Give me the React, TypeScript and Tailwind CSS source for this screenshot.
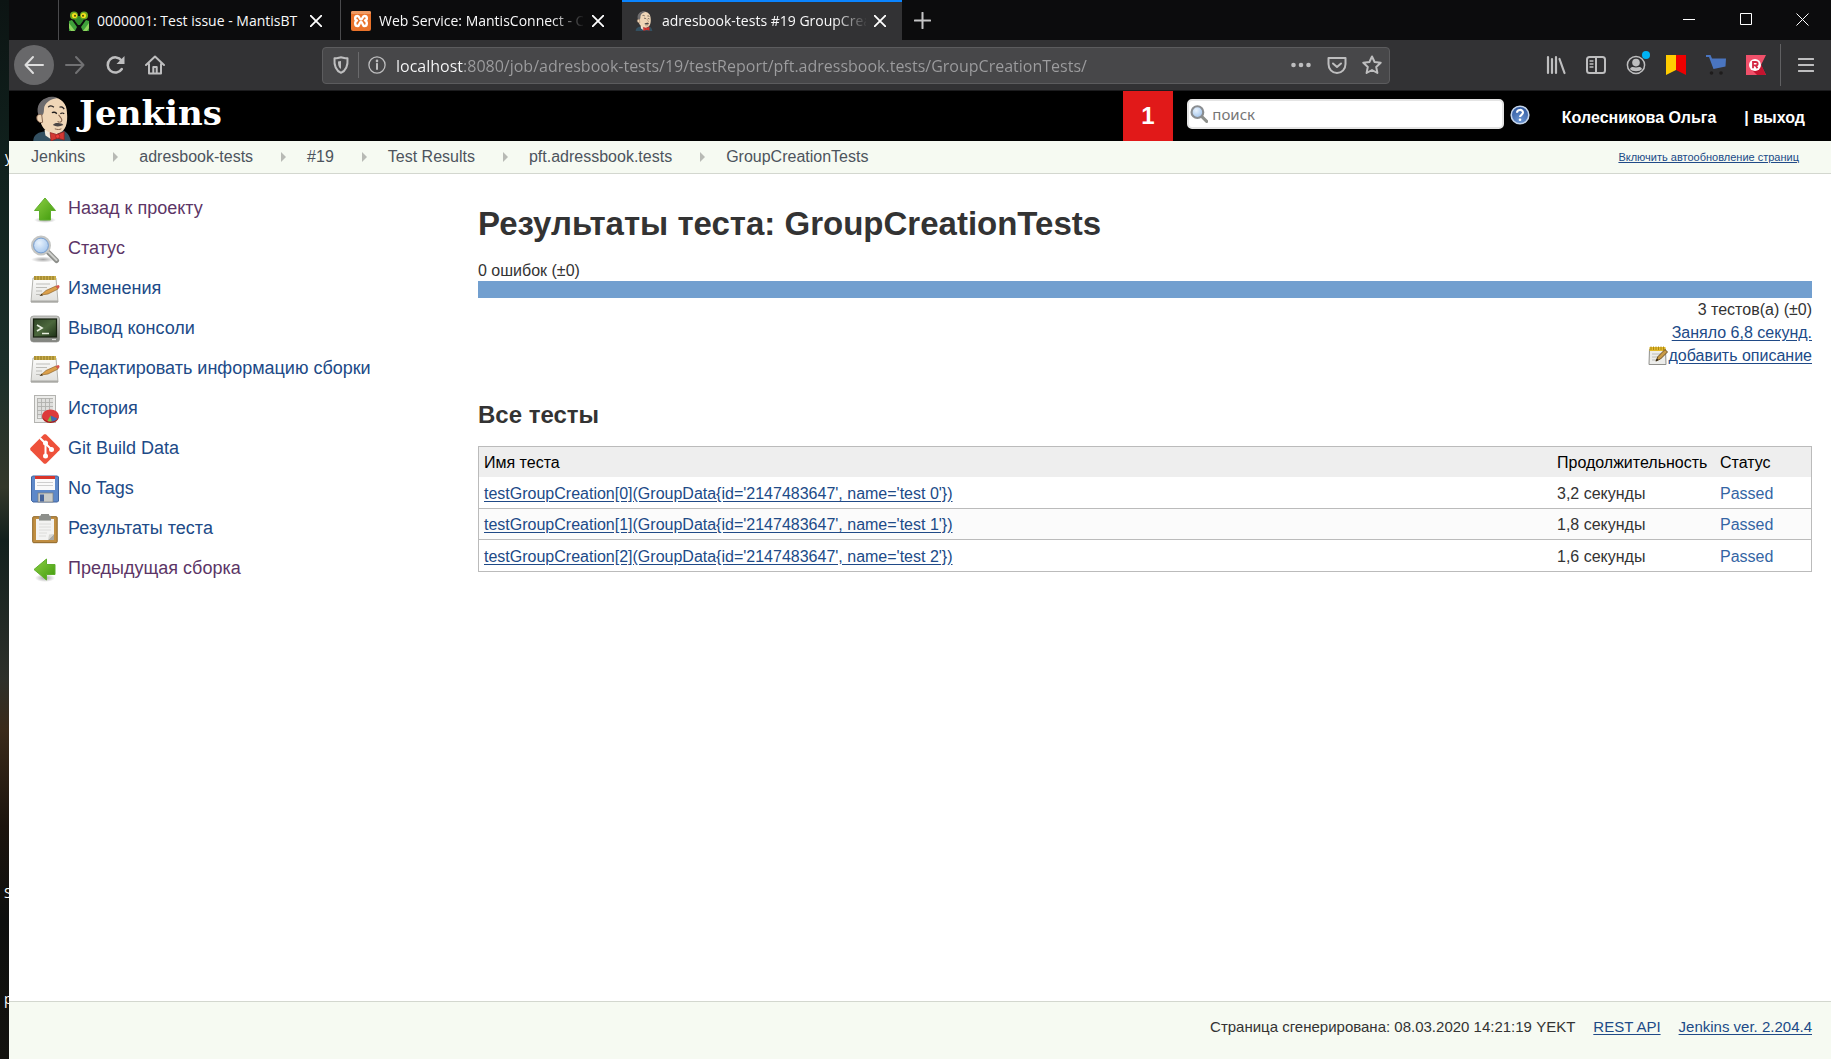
import React from 'react';

/* ---------- favicons and logo ---------- */

const Butler = ({ className }: { className: string }) => (
  <svg viewBox="0 0 42 48" className={className} aria-hidden="true">
    <path d="M1 48C1 42 5 39 11 38L31 36C37 38 40 42 41 48Z" fill="#335061" />
    <path d="M13 36L28 36L26 44L20 46L14 42Z" fill="#f4eadb" />
    <path d="M8 22C5 12 9 4 18 2C29 0 37 7 37 18C38 28 36 38 27 40C17 41 10 34 9 28Z" fill="#f0d6b7" />
    <path d="M8 23C3 15 6 5 15 2C19 0 24 1 27 2C20 3 15 6 13 11C12 14 13 18 11 20Z" fill="#6d6b6d" />
    <path d="M10 20C6 19 4 21 5 25C6 28 9 29 11 28Z" fill="#f0d6b7" stroke="#81614c" strokeWidth="1" />
    <path d="M17 12C18 10 21 10 23 12M29 12C31 11 33 12 34 14" fill="none" stroke="#231f20" strokeWidth="1.3" />
    <path d="M21 18C22 17 25 17 26 19M30 19C31 18 33 18 34 19" fill="none" stroke="#231f20" strokeWidth="1.5" />
    <path d="M28 20C30 23 33 25 31 27C30 28 28 28 27 27" fill="none" stroke="#81614c" strokeWidth="1.1" />
    <path d="M22 31C24 28 27 29 29 29C31 29 33 30 33 31C29 33 25 33 22 31Z" fill="#4b4645" />
    <path d="M24 35C27 36 29 36 31 35" fill="none" stroke="#81614c" strokeWidth="1" />
    <path d="M19 39L26 41L34 38L34 47L27 45L20 48Z" fill="#d33833" stroke="#8d1f1c" strokeWidth="0.8" />
    <circle cx="27" cy="43" r="2.2" fill="#ef3d3a" stroke="#8d1f1c" strokeWidth="0.6" />
  </svg>
);

const Mantis = () => (
  <svg viewBox="0 0 20 20" className="size-5 shrink-0" aria-hidden="true">
    <path d="M0 10L3 9L8 16L6 20H0ZM20 10L17 9L12 16L14 20H20Z" fill="#3fa03a" />
    <path d="M0 12L6 20H2L0 17ZM20 12L14 20H18L20 17Z" fill="#8fd45f" />
    <path d="M4 5H16L14 10L11 14H9L6 10Z" fill="#2f8a2c" />
    <circle cx="5" cy="4.500" r="4" fill="#6aa81e" />
    <circle cx="15" cy="4.500" r="4" fill="#6aa81e" />
    <circle cx="5.500" cy="4.500" r="2.600" fill="#f3e01c" />
    <circle cx="14.500" cy="4.500" r="2.600" fill="#f3e01c" />
    <circle cx="6" cy="4.800" r="1" fill="#4a4a08" />
    <circle cx="14" cy="4.800" r="1" fill="#4a4a08" />
  </svg>
);

const Xampp = () => (
  <svg viewBox="0 0 20 20" className="size-5 shrink-0" aria-hidden="true">
    <rect width="20" height="20" rx="2" fill="#e9722a" />
    <rect width="20" height="3" rx="1.5" fill="#f09a62" />
    <path
      d="M6.500 5C3.500 5 3.500 9 6 9.500C3.500 10.500 3.500 15 6.500 15C9 15 8 11 10 11C12 11 11 15 13.500 15C16.500 15 16.500 10.500 14 9.500C16.500 9 16.500 5 13.500 5C11 5 12 8.500 10 8.500C8 8.500 9 5 6.500 5Z"
      fill="none"
      stroke="#fff"
      strokeWidth="2.4"
      strokeLinejoin="round"
    />
  </svg>
);

/* ---------- browser icons ---------- */

const Line = ({ children, className = 'size-5', width = 2 }: { children: React.ReactNode; className?: string; width?: number }) => (
  <svg
    viewBox="0 0 20 20"
    className={className}
    fill="none"
    stroke="currentColor"
    strokeWidth={width}
    strokeLinecap="round"
    strokeLinejoin="round"
    aria-hidden="true"
  >
    {children}
  </svg>
);

const CloseMark = () => (
  <Line className="size-3" width={3}>
    <path d="M1 1L19 19M19 1L1 19" />
  </Line>
);

type Tab = { title: string; icon: React.ReactNode; active?: boolean; fade?: boolean };

const tabs: Tab[] = [
  { title: '0000001: Test issue - MantisBT', icon: <Mantis /> },
  { title: 'Web Service: MantisConnect - Current', icon: <Xampp />, fade: true },
  { title: 'adresbook-tests #19 GroupCreationTests', icon: <Butler className="h-5 w-5 shrink-0" />, active: true, fade: true },
];

const TabStrip = () => (
  <div className="flex h-10 bg-[#0c0c0d] pl-[49px]">
    {tabs.map((t) => (
      <div
        key={t.title}
        className={
          t.active
            ? 'flex w-[280px] items-center border-t-2 border-[#0a84ff] bg-[#323234] pr-3 pb-px pl-3'
            : 'flex w-[282px] items-center border-l border-[#4a4a4c] pt-px pr-[14px] pl-[10px]'
        }
      >
        {t.icon}
        <span
          className={
            t.fade
              ? 'ml-2 w-[204px] overflow-hidden whitespace-nowrap text-[14px] leading-5 text-[#f9f9fa] [mask-image:linear-gradient(90deg,#000_172px,transparent_206px)]'
              : 'ml-2 w-[204px] whitespace-nowrap text-[14px] leading-5 text-[#f9f9fa]'
          }
        >
          {t.title}
        </span>
        <button aria-label="Закрыть вкладку" className="ml-auto flex size-5 items-center justify-center text-white">
          <CloseMark />
        </button>
      </div>
    ))}
    <button aria-label="Новая вкладка" className="flex w-10 items-center justify-center text-[#c4c4c5]">
      <Line className="size-[17px]" width={2.4}>
        <path d="M10 1V19M1 10H19" />
      </Line>
    </button>
    <div className="ml-auto flex text-white">
      <button aria-label="Свернуть" className="flex h-[38px] w-[57px] items-center justify-center">
        <svg viewBox="0 0 12 12" className="size-3" aria-hidden="true"><path d="M0 6.500H12" stroke="currentColor" /></svg>
      </button>
      <button aria-label="Развернуть" className="flex h-[38px] w-[57px] items-center justify-center">
        <svg viewBox="0 0 12 12" className="size-3" aria-hidden="true"><path d="M.5.5H11.500V11.500H.5Z" fill="none" stroke="currentColor" /></svg>
      </button>
      <button aria-label="Закрыть" className="flex h-[38px] w-[57px] items-center justify-center">
        <svg viewBox="0 0 13 13" className="size-[13px]" aria-hidden="true"><path d="M.5.5L12.500 12.500M12.500.5L.5 12.500" stroke="currentColor" /></svg>
      </button>
    </div>
  </div>
);

const ToolButton = ({ label, children }: { label: string; children: React.ReactNode }) => (
  <button aria-label={label} className="flex h-10 w-10 shrink-0 items-center justify-center">
    {children}
  </button>
);

const NavBar = () => (
  <div className="flex h-[51px] items-center border-b border-[#1c1c1e] bg-[#323234] pl-[5px] text-[#bebebf]">
    <button aria-label="Назад" className="mr-px flex size-10 items-center justify-center rounded-full bg-[#68686a] text-[#dedede]">
      <Line><path d="M19 10H1.500M9 2L1.500 10L9 18" /></Line>
    </button>
    <span className="text-[#717173]">
      <ToolButton label="Вперёд"><Line><path d="M1 10H18.500M11 2L18.500 10L11 18" /></Line></ToolButton>
    </span>
    <ToolButton label="Обновить">
      <svg viewBox="0 0 20 20" className="size-5" aria-hidden="true">
        <path d="M16.500 5.500A7.600 7.600 0 1 0 16.800 14" fill="none" stroke="currentColor" strokeWidth="2.500" strokeLinecap="round" />
        <path d="M19.500 1V9H11.500Z" fill="currentColor" />
      </svg>
    </ToolButton>
    <ToolButton label="Домой">
      <Line>
        <path d="M1 10L10 1.500L19 10M4 9V18.500H16V9" />
        <path d="M8.300 18V12H11.700V18" />
      </Line>
    </ToolButton>

    <div className="mr-[146px] ml-[147px] flex h-[37px] flex-1 items-center rounded-sm border border-[#5c5c5e] bg-[#474749]">
      <button aria-label="Защита" className="flex w-[35px] items-center justify-center">
        <svg viewBox="0 0 18 18" className="size-[18px]" aria-hidden="true">
          <path d="M2.500 2.300C5 2.500 7 1.500 9 1.200C11 1.500 13 2.500 15.500 2.300C16 9 14.500 14.500 9 16.800C3.500 14.500 2 9 2.500 2.300Z" fill="none" stroke="currentColor" strokeWidth="2" strokeLinejoin="round" />
          <path d="M9 5V13C6.500 11.500 6 9 6 5.500Z" fill="currentColor" />
        </svg>
      </button>
      <div className="h-[26px] w-px bg-[#6a6a6c]" />
      <button aria-label="Сведения о сайте" className="flex w-[35px] items-center justify-center">
        <svg viewBox="0 0 18 18" className="size-[18px]" aria-hidden="true">
          <circle cx="9" cy="9" r="8.100" fill="none" stroke="currentColor" strokeWidth="1.300" />
          <path d="M9 7.800V13" stroke="currentColor" strokeWidth="2" strokeLinecap="round" />
          <circle cx="9" cy="4.900" r="1.300" fill="currentColor" />
        </svg>
      </button>
      <input
        aria-label="Адрес"
        readOnly
        value="localhost:8080/job/adresbook-tests/19/testReport/pft.adressbook.tests/GroupCreationTests/"
        className="ml-0.5 h-[34px] min-w-0 flex-1 bg-[linear-gradient(90deg,#f9f9fa_68px,#9d9d9f_68px)] bg-clip-text pt-0.5 text-[16px] text-transparent outline-none"
      />
      <button aria-label="Действия" className="flex w-9 items-center justify-center">
        <svg viewBox="0 0 20 20" className="size-5" fill="currentColor" aria-hidden="true">
          <circle cx="2.500" cy="10" r="2.300" /><circle cx="10" cy="10" r="2.300" /><circle cx="17.500" cy="10" r="2.300" />
        </svg>
      </button>
      <button aria-label="Pocket" className="flex w-[35px] items-center justify-center">
        <Line>
          <path d="M1.500 3H18.500V9C18.500 14 15 18 10 18C5 18 1.500 14 1.500 9Z" />
          <path d="M6 8.500L10 12L14 8.500" />
        </Line>
      </button>
      <button aria-label="Закладка" className="flex w-[35px] items-center justify-center">
        <Line><path d="M10 1.500L12.600 7L18.700 7.700L14.200 11.900L15.400 18L10 15L4.600 18L5.800 11.900L1.300 7.700L7.400 7Z" /></Line>
      </button>
    </div>

    <ToolButton label="Библиотека">
      <Line width={2.2}><path d="M2 2V18M6 4V18M10 2V18M13.500 4L18.500 18" strokeWidth="2.200" /></Line>
    </ToolButton>
    <ToolButton label="Боковая панель">
      <Line>
        <rect x="1" y="2" width="18" height="16" rx="2.500" />
        <path d="M10 2V18" />
        <path d="M4 6H7M4 9H7M4 12H7" strokeWidth="1.300" />
      </Line>
    </ToolButton>
    <ToolButton label="Аккаунт">
      <span className="relative flex">
        <svg viewBox="0 0 20 20" className="size-5" aria-hidden="true">
          <circle cx="10" cy="10" r="8.600" fill="none" stroke="currentColor" strokeWidth="1.500" />
          <circle cx="10" cy="7.600" r="3.800" fill="currentColor" />
          <path d="M4 14C5 11.500 7 12 10 12.500C13 12 15 11.500 16 14C14 17 6 17 4 14Z" fill="currentColor" />
        </svg>
        <span className="absolute -top-1 -right-1 size-2 rounded-full bg-[#00b3f4]" />
      </span>
    </ToolButton>
    <ToolButton label="Закладки Яндекса">
      <svg viewBox="0 0 20 20" className="size-5" aria-hidden="true">
        <path d="M0 0H10V15L0 20Z" fill="#ffcc00" /><path d="M10 0H20V20L10 15Z" fill="#ee0000" />
      </svg>
    </ToolButton>
    <ToolButton label="Покупки">
      <svg viewBox="0 0 20 20" className="size-5" aria-hidden="true">
        <path d="M0 0H4.500L6 3.500H20L19.500 11.500L7.500 14L3 2H0Z" fill="#4a75c0" />
        <circle cx="5.500" cy="18" r="1.800" fill="#1e1c1c" /><circle cx="15" cy="18" r="1.800" fill="#1e1c1c" />
      </svg>
    </ToolButton>
    <ToolButton label="Расширение">
      <svg viewBox="0 0 20 20" className="size-5" aria-hidden="true">
        <path d="M0 0H20L15 10L20 20H0Z" fill="#f0506a" />
        <path d="M5 14L14 7L20 20H11Z" fill="#c4142f" />
        <circle cx="9" cy="10" r="6" fill="#fff" />
        <path d="M7 13.300V7H9.800C12.300 7 12.300 10.400 9.800 10.400H7M9.600 10.400L11.500 13.300" fill="none" stroke="#d42743" strokeWidth="1.800" />
      </svg>
    </ToolButton>
    <div className="ml-1 h-[42px] w-px bg-[#606062]" />
    <button aria-label="Меню" className="flex h-10 w-[50px] items-center justify-center">
      <Line className="size-4" width={2.6}><path d="M1 2.500H19M1 10H19M1 17.500H19" /></Line>
    </button>
  </div>
);

/* ---------- page icons ---------- */

const Icon = ({ children }: { children: React.ReactNode }) => (
  <svg viewBox="0 0 30 30" className="size-[30px] shrink-0" aria-hidden="true">{children}</svg>
);

const Gradients = () => (
  <svg className="absolute size-0" aria-hidden="true">
    <defs>
      <linearGradient id="green" x1="0" y1="0" x2="1" y2="1">
        <stop offset="0" stopColor="#8fd044" /><stop offset="1" stopColor="#3f9a0c" />
      </linearGradient>
      <radialGradient id="glass" cx="0.4" cy="0.35" r="0.7">
        <stop offset="0" stopColor="#e9f3fd" /><stop offset="1" stopColor="#9cc0ea" />
      </radialGradient>
      <linearGradient id="screen" x1="0" y1="0" x2="1" y2="1">
        <stop offset="0" stopColor="#2e4425" /><stop offset="0.5" stopColor="#4c683d" /><stop offset="1" stopColor="#1d3016" />
      </linearGradient>
      <linearGradient id="bezel" x1="0" y1="0" x2="0" y2="1">
        <stop offset="0" stopColor="#c9cac6" /><stop offset="1" stopColor="#7f827c" />
      </linearGradient>
      <linearGradient id="paper" x1="0" y1="0" x2="0" y2="1">
        <stop offset="0" stopColor="#fdfdfc" /><stop offset="1" stopColor="#dfdfdc" />
      </linearGradient>
      <radialGradient id="shadow">
        <stop offset="0" stopColor="#000" stopOpacity="0.350" /><stop offset="1" stopColor="#000" stopOpacity="0" />
      </radialGradient>
      <radialGradient id="help" cx="0.5" cy="0.8" r="0.8">
        <stop offset="0" stopColor="#6d97d3" /><stop offset="1" stopColor="#2d559c" />
      </radialGradient>
    </defs>
  </svg>
);

const UpArrow = () => (
  <Icon>
    <ellipse cx="15" cy="26" rx="11" ry="3" fill="url(#shadow)" />
    <path d="M15 4L25.500 16.500H20.500V26H9.500V16.500H4.500Z" fill="url(#green)" stroke="#5fae2c" />
  </Icon>
);

const LeftArrow = () => (
  <Icon>
    <ellipse cx="15" cy="24" rx="10" ry="4" fill="url(#shadow)" />
    <path d="M4 15.500L16.500 5V10.500H25V20.500H16.500V26Z" fill="url(#green)" stroke="#5fae2c" />
  </Icon>
);

const Magnifier = () => (
  <Icon>
    <ellipse cx="13" cy="25.500" rx="12" ry="3" fill="url(#shadow)" />
    <path d="M18 18L26.500 26.500" stroke="#8d8f8b" strokeWidth="5" strokeLinecap="round" />
    <path d="M19 18.500L26.500 26" stroke="#cfd0cd" strokeWidth="2" strokeLinecap="round" />
    <circle cx="11" cy="11.500" r="8.700" fill="url(#glass)" stroke="#c5c6c4" strokeWidth="2.600" />
    <circle cx="11" cy="11.500" r="7.400" fill="none" stroke="#6d96cc" strokeWidth="0.900" />
  </Icon>
);

const Notepad = () => (
  <Icon>
    <path d="M3 4H26L28 28H1Z" fill="url(#paper)" stroke="#b4b4b0" />
    <path d="M1 26.500H28V28.500H1Z" fill="#a9a9a5" />
    <path d="M4 2H26V6H4Z" fill="#c9ad49" />
    <path d="M5 2V6M8 2V6M11 2V6M14 2V6M17 2V6M20 2V6M23 2V6" stroke="#8c7526" />
    <path d="M6 10H20M6 13.500H17M6 17H12M6 20.500H10" stroke="#bdbdb9" strokeWidth="1.200" />
    <path d="M11 21L16 16.500L26 12L28 15L18 20Z" fill="#dca04a" stroke="#8f6428" strokeWidth="0.700" />
    <path d="M25.500 12L28.500 11C30 11.500 30 13.500 28 15Z" fill="#d8574e" />
    <path d="M9.500 22L11.500 19.500L13 21.500Z" fill="#4f3b1d" />
  </Icon>
);

const Terminal = () => (
  <Icon>
    <rect x="0.500" y="2" width="29" height="26" rx="3" fill="url(#bezel)" stroke="#8f918c" strokeWidth="0.700" />
    <rect x="3.500" y="5" width="23" height="18" fill="url(#screen)" stroke="#17200f" strokeWidth="1.200" />
    <path d="M7 11L12 14L7 17" fill="none" stroke="#e8efe0" strokeWidth="1.700" />
    <path d="M12 19.500H19" stroke="#e8efe0" strokeWidth="1.500" />
    <path d="M22 25.500H26" stroke="#d7d8d5" strokeWidth="1.200" />
  </Icon>
);

const Chart = () => (
  <Icon>
    <rect x="4.500" y="1.500" width="21" height="27" fill="#ececea" stroke="#b3b3b0" />
    <path d="M7 4H23V23H7Z" fill="#dededc" />
    <path d="M7 4.500H23M7 8.500H23M7 12.500H23M7 16.500H23M7 20.500H23M7 24.500H18M7.500 4V25M11.500 4V25M15.500 4V25M19.500 4V20" stroke="#b0b0ad" strokeWidth="0.900" />
    <ellipse cx="20.500" cy="23" rx="8.300" ry="6" fill="#a81717" />
    <ellipse cx="20.500" cy="21.500" rx="8.300" ry="6" fill="#dd3b3b" />
    <path d="M20.500 21.500L27.500 24.500C26 26.500 24 27.500 21.500 27.500Z" fill="#3e6db3" />
    <path d="M20.500 21.500L21.500 27.500C20 27.600 18.500 27.400 17.500 27Z" fill="#7cc043" />
  </Icon>
);

const Git = () => (
  <Icon>
    <path d="M13.800.6C14.500 0 15.500 0 16.200.6L29.400 13.800C30 14.500 30 15.500 29.400 16.200L16.200 29.400C15.500 30 14.500 30 13.800 29.400L.6 16.200C0 15.500 0 14.500.6 13.800Z" fill="#ee513b" />
    <path d="M10 4L15.500 9.500V22.500M15.500 9.500L21 15" fill="none" stroke="#fff" strokeWidth="2" />
    <circle cx="15.500" cy="9" r="2.500" fill="#fff" />
    <circle cx="15.500" cy="22" r="2.500" fill="#fff" />
    <circle cx="21.500" cy="15.500" r="2.500" fill="#fff" />
  </Icon>
);

const Floppy = () => (
  <Icon>
    <path d="M2.500 2H27.500L28.500 3V27L27.500 28H3L1.500 26.500V3Z" fill="#5d88c9" stroke="#41659f" />
    <rect x="5" y="2.500" width="20" height="13.500" fill="#fafafa" />
    <rect x="5" y="2" width="20" height="3" fill="#d8352a" />
    <path d="M7 8.500H23M7 11.500H23" stroke="#cfcfcf" />
    <rect x="8" y="19" width="15" height="9" fill="#c9cbc8" stroke="#7d7f7c" strokeWidth="0.700" />
    <rect x="10" y="20.500" width="4" height="7" fill="#45639a" />
  </Icon>
);

const Clipboard = () => (
  <Icon>
    <rect x="2.700" y="2.700" width="24.500" height="26" rx="1" fill="#c08e42" stroke="#8d6426" />
    <path d="M6 5H24V26H6Z" fill="#f3f3f2" />
    <path d="M9 10H21M9 13H21M9 16H21M9 19H17M9 22H16" stroke="#dcdcda" />
    <path d="M24 20L18 26H24Z" fill="#a9a9a6" />
    <path d="M18 26L19 20.500L24 20Z" fill="#d7d7d4" />
    <path d="M9 7V3C9 2 10 1.500 11 1.500V0H19V1.500C20 1.500 21 2 21 3V7Z" fill="#8d8f8b" />
    <path d="M9 6.500H21" stroke="#b9bbb7" />
  </Icon>
);

/* ---------- page ---------- */

const Header = () => (
  <header className="flex h-[50px] bg-black">
    <a href="#home" className="flex pt-[5px] pl-[23px]">
      <Butler className="h-[45px] w-10" />
      <span className="ml-[7px] font-['DejaVu_Serif','Liberation_Serif',serif] text-[34px] leading-[34px] font-bold text-white">Jenkins</span>
    </a>
    <a href="#monitors" className="ml-auto flex w-[50px] items-center justify-center bg-[#e11919] text-[24px] font-bold text-white">1</a>
    <form className="ml-3.5 flex items-start pt-2">
      <label className="flex h-[30px] w-[317px] items-center rounded-[5px] border-2 border-[#e4e4e4] bg-white">
        <svg viewBox="0 0 30 30" className="ml-px size-5" aria-hidden="true">
          <path d="M18 18L27 27" stroke="#8d8f8b" strokeWidth="5" strokeLinecap="round" />
          <circle cx="12" cy="12" r="9.500" fill="url(#glass)" stroke="#8a8d90" strokeWidth="3.500" />
        </svg>
        <input type="text" placeholder="поиск" aria-label="поиск" className="ml-1 w-full min-w-0 bg-transparent font-['Noto_Sans',sans-serif] text-[15px] outline-none placeholder:text-[#757575]" />
      </label>
      <a href="#help" aria-label="Справка" className="mt-1.5 ml-1.5">
        <svg viewBox="0 0 20 20" className="size-5" aria-hidden="true">
          <circle cx="10" cy="10" r="8.800" fill="url(#help)" stroke="#c6d6ec" strokeWidth="1.600" />
          <path d="M7 7.800C7 4 13 4 13 7.600C13 9.800 10 9.800 10 12" fill="none" stroke="#fff" strokeWidth="2.100" />
          <circle cx="10" cy="14.700" r="1.300" fill="#fff" />
        </svg>
      </a>
    </form>
    <div className="flex items-center pt-1 pr-[26px] pl-8 text-[16px] font-bold whitespace-nowrap text-white">
      <a href="#user">Колесникова Ольга</a>
      <span className="ml-7">|&nbsp;<a href="#logout">выход</a></span>
    </div>
  </header>
);

const crumbs = ['Jenkins', 'adresbook-tests', '#19', 'Test Results', 'pft.adressbook.tests', 'GroupCreationTests'];

const Breadcrumbs = () => (
  <nav className="flex h-[33px] items-center border-b border-[#d3d7cf] bg-[#f6faf2] pr-8 pl-[22px] text-[16px] text-[#4d545d]">
    {crumbs.map((c, i) => (
      <React.Fragment key={c}>
        {i > 0 && (
          <svg viewBox="0 0 5 10" className="mr-[21px] ml-7 h-2.5 w-[5px]" aria-hidden="true"><path d="M0 0L5 5L0 10Z" fill="#b8bab5" /></svg>
        )}
        <a href="#crumb">{c}</a>
      </React.Fragment>
    ))}
    <a href="#refresh" className="ml-auto text-[11px] text-[#204a87] underline">Включить автообновление страниц</a>
  </nav>
);

const tasks = [
  { label: 'Назад к проекту', icon: <UpArrow />, visited: true },
  { label: 'Статус', icon: <Magnifier />, visited: true },
  { label: 'Изменения', icon: <Notepad /> },
  { label: 'Вывод консоли', icon: <Terminal /> },
  { label: 'Редактировать информацию сборки', icon: <Notepad /> },
  { label: 'История', icon: <Chart /> },
  { label: 'Git Build Data', icon: <Git /> },
  { label: 'No Tags', icon: <Floppy /> },
  { label: 'Результаты теста', icon: <Clipboard /> },
  { label: 'Предыдущая сборка', icon: <LeftArrow />, visited: true },
];

const Sidebar = () => (
  <aside className="w-[469px] shrink-0 pt-[14px] pl-[21px]">
    {tasks.map((t) => (
      <a key={t.label} href="#task" className="flex h-10 items-start gap-2 pt-1 text-[18px]">
        <span className="pt-0.5">{t.icon}</span>
        <span className={t.visited ? 'leading-8 text-[#5c3566]' : 'leading-8 text-[#204a87]'}>{t.label}</span>
      </a>
    ))}
  </aside>
);

const rows = [
  { n: 0, time: '3,2 секунды' },
  { n: 1, time: '1,8 секунды' },
  { n: 2, time: '1,6 секунды' },
];

const Results = () => (
  <main className="min-w-0 flex-1 pt-[30px] pr-[19px] text-[16px] text-[#333333]">
    <h1 className="text-[33px] leading-10 font-bold">Результаты теста: GroupCreationTests</h1>
    <p className="mt-[17px] leading-5">0 ошибок (±0)</p>
    <div className="h-[17px] bg-[#729fcf]" />
    <div className="text-right leading-[23px]">
      <p>3 тестов(а) (±0)</p>
      <p><a href="#time" className="text-[#204a87] underline underline-offset-2">Заняло 6,8 секунд.</a></p>
      <p className="flex items-center justify-end">
        <svg viewBox="0 0 20 20" className="size-5" aria-hidden="true">
          <path d="M1.500 3H17.500L18 18.500H1Z" fill="#ededeb" stroke="#90908c" />
          <path d="M1.500 1H17.500V5H1.500Z" fill="#e3bb2e" />
          <path d="M3 .5V4M5.500.5V4M8 .5V4M10.500.5V4M13 .5V4M15.500.5V4" stroke="#a98310" strokeWidth="0.900" />
          <path d="M4 8H13M4 11H11M4 14H9" stroke="#bdbdb9" />
          <path d="M8 15L10 10.500L17 3.500L19.500 6L12.500 13Z" fill="#c99a45" stroke="#5e431a" strokeWidth="0.900" />
          <path d="M7.500 15.500L9 12.500L10.500 14Z" fill="#2b2010" />
        </svg>
        <a href="#describe" className="text-[#204a87] underline underline-offset-2">добавить описание</a>
      </p>
    </div>
    <h2 className="mt-[33px] text-[24px] leading-[30px] font-bold">Все тесты</h2>
    <table className="mt-4 w-full border-separate border-spacing-0 border border-[#bbbbbb] leading-[22px]">
      <thead>
        <tr className="bg-[#eeeeee] text-left text-black">
          <th className="h-[31px] border-b border-white px-[5px] pt-0.5 font-normal">Имя теста</th>
          <th className="w-[163px] border-b border-white px-[5px] pt-0.5 font-normal">Продолжительность</th>
          <th className="w-24 border-b border-white px-[5px] pt-0.5 font-normal">Статус</th>
        </tr>
      </thead>
      <tbody className="[&_td]:h-[31px] [&_td]:border-b [&_td]:border-[#bbbbbb] [&_td]:px-[5px] [&_td]:pt-0.5 [&_tr:last-child_td]:border-b-0 [&_tr:nth-child(2)]:bg-[#fbfbfb]">
        {rows.map((r) => (
          <tr key={r.n}>
            <td>
              <a href="#test" className="text-[#204a87] underline underline-offset-2">{`testGroupCreation[${r.n}](GroupData{id='2147483647', name='test ${r.n}'})`}</a>
            </td>
            <td>{r.time}</td>
            <td className="text-[#3465a4]">Passed</td>
          </tr>
        ))}
      </tbody>
    </table>
  </main>
);

const Footer = () => (
  <footer className="flex h-[58px] items-start justify-end border-t border-[#d3d7cf] bg-[#f6faf2] pt-[14px] pr-[19px] text-[15px] leading-[22px] text-[#333333]">
    <span>Страница сгенерирована: 08.03.2020 14:21:19 YEKT</span>
    <a href="#api" className="ml-[18px] text-[#204a87] underline underline-offset-2">REST API</a>
    <a href="#version" className="ml-[18px] text-[#204a87] underline underline-offset-2">Jenkins ver. 2.204.4</a>
  </footer>
);

const Desktop = () => (
  <div className="relative w-[9px] shrink-0 overflow-hidden bg-[linear-gradient(180deg,#0c1413_0%,#10211d_15%,#1c2f2a_35%,#34382b_46%,#12201d_51%,#2d302a_64%,#3a2a1a_69%,#1c140d_78%,#0d0f0e_87%,#14130f_100%)] font-['Open_Sans',sans-serif] text-[14px] leading-5 text-white">
    <span className="absolute top-[147px] left-[5px]">y</span>
    <span className="absolute top-[883px] left-1">S</span>
    <span className="absolute top-[989px] left-1">p</span>
  </div>
);

export default function App() {
  return (
    <div className="flex min-h-screen bg-white">
      <Gradients />
      <Desktop />
      <div className="flex min-w-0 flex-1 flex-col font-['Liberation_Sans',Arial,sans-serif]">
        <div className="font-['Open_Sans','Noto_Sans',sans-serif]">
          <TabStrip />
          <NavBar />
        </div>
        <Header />
        <Breadcrumbs />
        <div className="flex flex-1">
          <Sidebar />
          <Results />
        </div>
        <Footer />
      </div>
    </div>
  );
}
